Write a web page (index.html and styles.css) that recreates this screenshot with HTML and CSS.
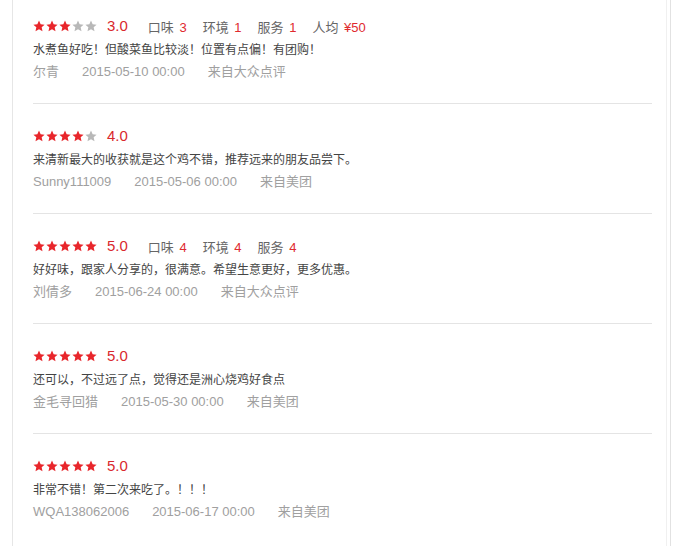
FILE: index.html
```html
<!DOCTYPE html>
<html lang="zh-CN">
<head>
<meta charset="utf-8">
<title>评价</title>
<link rel="stylesheet" href="styles.css">
</head>
<body>
<svg width="0" height="0" class="defs">
  <defs>
    <symbol id="star" viewBox="0 0 24 24">
      <path d="M12 1.2l3.3 7.3 7.9.8-5.9 5.4 1.7 7.9L12 18.5l-7 4.1 1.7-7.9L.8 9.3l7.9-.8z"/>
    </symbol>
  </defs>
</svg>
<div class="page">
  <div class="review">
    <div class="rating">
      <span class="stars"><svg class="on"><use href="#star"/></svg><svg class="on"><use href="#star"/></svg><svg class="on"><use href="#star"/></svg><svg class="off"><use href="#star"/></svg><svg class="off"><use href="#star"/></svg></span>
      <span class="score">3.0</span>
      <span class="subs"><span>口味 <em>3</em></span><span>环境 <em>1</em></span><span>服务 <em>1</em></span><span>人均 <em>¥50</em></span></span>
    </div>
    <p class="text">水煮鱼好吃！但酸菜鱼比较淡！位置有点偏！有团购！</p>
    <div class="meta"><span>尔青</span><span>2015-05-10 00:00</span><span>来自大众点评</span></div>
  </div>
  <div class="review">
    <div class="rating">
      <span class="stars"><svg class="on"><use href="#star"/></svg><svg class="on"><use href="#star"/></svg><svg class="on"><use href="#star"/></svg><svg class="on"><use href="#star"/></svg><svg class="off"><use href="#star"/></svg></span>
      <span class="score">4.0</span>
    </div>
    <p class="text">来清新最大的收获就是这个鸡不错，推荐远来的朋友品尝下。</p>
    <div class="meta"><span>Sunny111009</span><span>2015-05-06 00:00</span><span>来自美团</span></div>
  </div>
  <div class="review">
    <div class="rating">
      <span class="stars"><svg class="on"><use href="#star"/></svg><svg class="on"><use href="#star"/></svg><svg class="on"><use href="#star"/></svg><svg class="on"><use href="#star"/></svg><svg class="on"><use href="#star"/></svg></span>
      <span class="score">5.0</span>
      <span class="subs"><span>口味 <em>4</em></span><span>环境 <em>4</em></span><span>服务 <em>4</em></span></span>
    </div>
    <p class="text">好好味，跟家人分享的，很满意。希望生意更好，更多优惠。</p>
    <div class="meta"><span>刘倩多</span><span>2015-06-24 00:00</span><span>来自大众点评</span></div>
  </div>
  <div class="review">
    <div class="rating">
      <span class="stars"><svg class="on"><use href="#star"/></svg><svg class="on"><use href="#star"/></svg><svg class="on"><use href="#star"/></svg><svg class="on"><use href="#star"/></svg><svg class="on"><use href="#star"/></svg></span>
      <span class="score">5.0</span>
    </div>
    <p class="text">还可以，不过远了点，觉得还是洲心烧鸡好食点</p>
    <div class="meta"><span>金毛寻回猎</span><span>2015-05-30 00:00</span><span>来自美团</span></div>
  </div>
  <div class="review last">
    <div class="rating">
      <span class="stars"><svg class="on"><use href="#star"/></svg><svg class="on"><use href="#star"/></svg><svg class="on"><use href="#star"/></svg><svg class="on"><use href="#star"/></svg><svg class="on"><use href="#star"/></svg></span>
      <span class="score">5.0</span>
    </div>
    <p class="text">非常不错！第二次来吃了。！！！</p>
    <div class="meta"><span>WQA138062006</span><span>2015-06-17 00:00</span><span>来自美团</span></div>
  </div>
</div>
</body>
</html>
```

FILE: styles.css
```css
html, body {
  margin: 0;
  padding: 0;
  background: #fff;
}
body {
  font-family: "Liberation Sans", "Noto Sans CJK SC", sans-serif;
  color: #444;
}
.defs {
  position: absolute;
  width: 0;
  height: 0;
  overflow: hidden;
}
.page {
  box-sizing: border-box;
  width: 659px;
  min-height: 546px;
  margin-left: 12px;
  border-left: 1px solid #e6e6e6;
  border-right: 1px solid #e2e2e2;
  box-shadow: inset -3px 0 0 #fff, inset -4px 0 0 #f0f0f0;
  padding: 0 18px 0 20px;
}
.review {
  padding: 21px 0 21px;
  border-bottom: 1px solid #e4e4e4;
}
.review:first-child {
  padding-top: 15px;
}
.review.last {
  border-bottom: none;
}
.rating {
  display: flex;
  align-items: center;
  height: 20px;
}
.stars {
  display: flex;
  gap: 1px;
  margin-top: 1px;
}
.stars svg {
  width: 12px;
  height: 12px;
}
.stars .on {
  fill: #e8262b;
}
.stars .off {
  fill: #b8b8b8;
}
.score {
  margin-left: 10px;
  font-size: 15px;
  color: #d9282d;
  line-height: 20px;
  margin-top: 1px;
}
.subs {
  display: flex;
  gap: 16px;
  margin-left: 20px;
  font-size: 13px;
  color: #666;
  margin-top: 2px;
}
.subs em {
  font-style: normal;
  color: #e02a2f;
  margin-left: 2px;
}
.text {
  margin: 4px 0 0;
  font-size: 12px;
  line-height: 22px;
  color: #444;
}
.meta {
  display: flex;
  gap: 23px;
  font-size: 13px;
  line-height: 21px;
  color: #a0a0a0;
}
```
